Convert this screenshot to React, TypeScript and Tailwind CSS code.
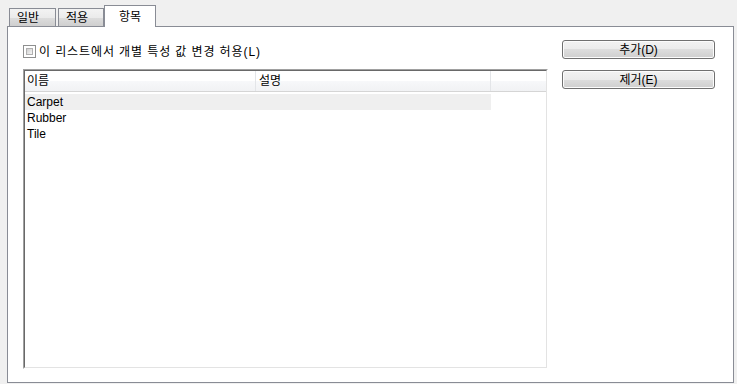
import React from "react";

const font = { fontFamily: '"Liberation Sans", "Noto Sans CJK KR", sans-serif' };

function Tab({ label, selected, className }: { label: string; selected?: boolean; className?: string }) {
  if (selected) {
    return (
      <div
        className={`relative z-10 -mb-px flex h-[22px] items-start justify-center border border-b-0 border-[#898c95] bg-white pt-[2px] text-[12px] text-black ${className ?? ""}`}
      >
        {label}
      </div>
    );
  }
  return (
    <div
      className={`flex h-[18px] items-center border border-b-0 border-[#898c95] bg-[linear-gradient(#f3f3f3,#ebebeb_50%,#dddddd_50%,#cfcfcf)] pl-[7px] text-[12px] text-black ${className ?? ""}`}
    >
      {label}
    </div>
  );
}

function Button({ label }: { label: string }) {
  return (
    <div className="flex h-[19px] w-[153px] items-center justify-center rounded-[3px] border border-[#707070] bg-[linear-gradient(#f2f2f2,#ebebeb_50%,#dddddd_50%,#cfcfcf)] text-[12px] leading-none text-black shadow-[inset_0_0_0_1px_#fcfcfc]">
      {label}
    </div>
  );
}

export default function App() {
  const rows = ["Carpet", "Rubber", "Tile"];
  return (
    <div style={font} className="flex h-[384px] w-[737px] flex-col bg-[#f0f0f0] pb-[1px] pl-[7px] pr-[3px] pt-[5px]">
      <div className="flex h-[21px] items-end pl-[2px]">
        <Tab label="일반" className="w-[47px]" />
        <Tab label="적용" className="ml-[2px] w-[46px]" />
        <Tab label="항목" selected className="w-[52px]" />
      </div>
      <div className="flex flex-1 items-start border border-[#898c95] bg-white">
        <div className="flex flex-col pl-[15px] pt-[18px]">
          <div className="flex h-[13px] items-center">
            <div className="h-[13px] w-[13px] border border-[#8e8f8f] bg-white p-[2px]">
              <div className="h-full w-full border border-[#b0b0b0] bg-[linear-gradient(135deg,#cfcfcf,#f6f6f6)]" />
            </div>
            <span className="ml-[3px] text-[12px] leading-none tracking-[0.9px] text-black">
              이 리스트에서 개별 특성 값 변경 허용(L)
            </span>
          </div>
          <div className="mt-[11px] h-[300px] w-[525px] border border-b-white border-l-[#a0a0a0] border-r-white border-t-[#a0a0a0]">
            <div className="flex h-full w-full flex-col border border-b-[#e3e3e3] border-l-[#696969] border-r-[#e3e3e3] border-t-[#696969] bg-white">
              <div className="flex h-[21px] border-b border-[#d5d5d5] bg-[linear-gradient(#ffffff,#ffffff_50%,#f7f8fa_50%,#f1f2f4)] text-[12px] text-black">
                <div className="flex w-[231px] items-center border-r border-[#e3e5e8] pl-[2px]">이름</div>
                <div className="flex w-[235px] items-center border-r border-[#e3e5e8] pl-[3px]">설명</div>
                <div className="flex-1" />
              </div>
              <div className="mt-[2px] flex flex-col">
                {rows.map((r, i) => (
                  <div
                    key={r}
                    className={`flex h-[16px] w-[466px] items-center pl-[2px] text-[12px] text-black ${i === 0 ? "bg-[#efefef]" : ""}`}
                  >
                    {r}
                  </div>
                ))}
              </div>
            </div>
          </div>
        </div>
        <div className="ml-[14px] flex flex-col gap-[11px] pt-[13px]">
          <Button label="추가(D)" />
          <Button label="제거(E)" />
        </div>
      </div>
    </div>
  );
}
